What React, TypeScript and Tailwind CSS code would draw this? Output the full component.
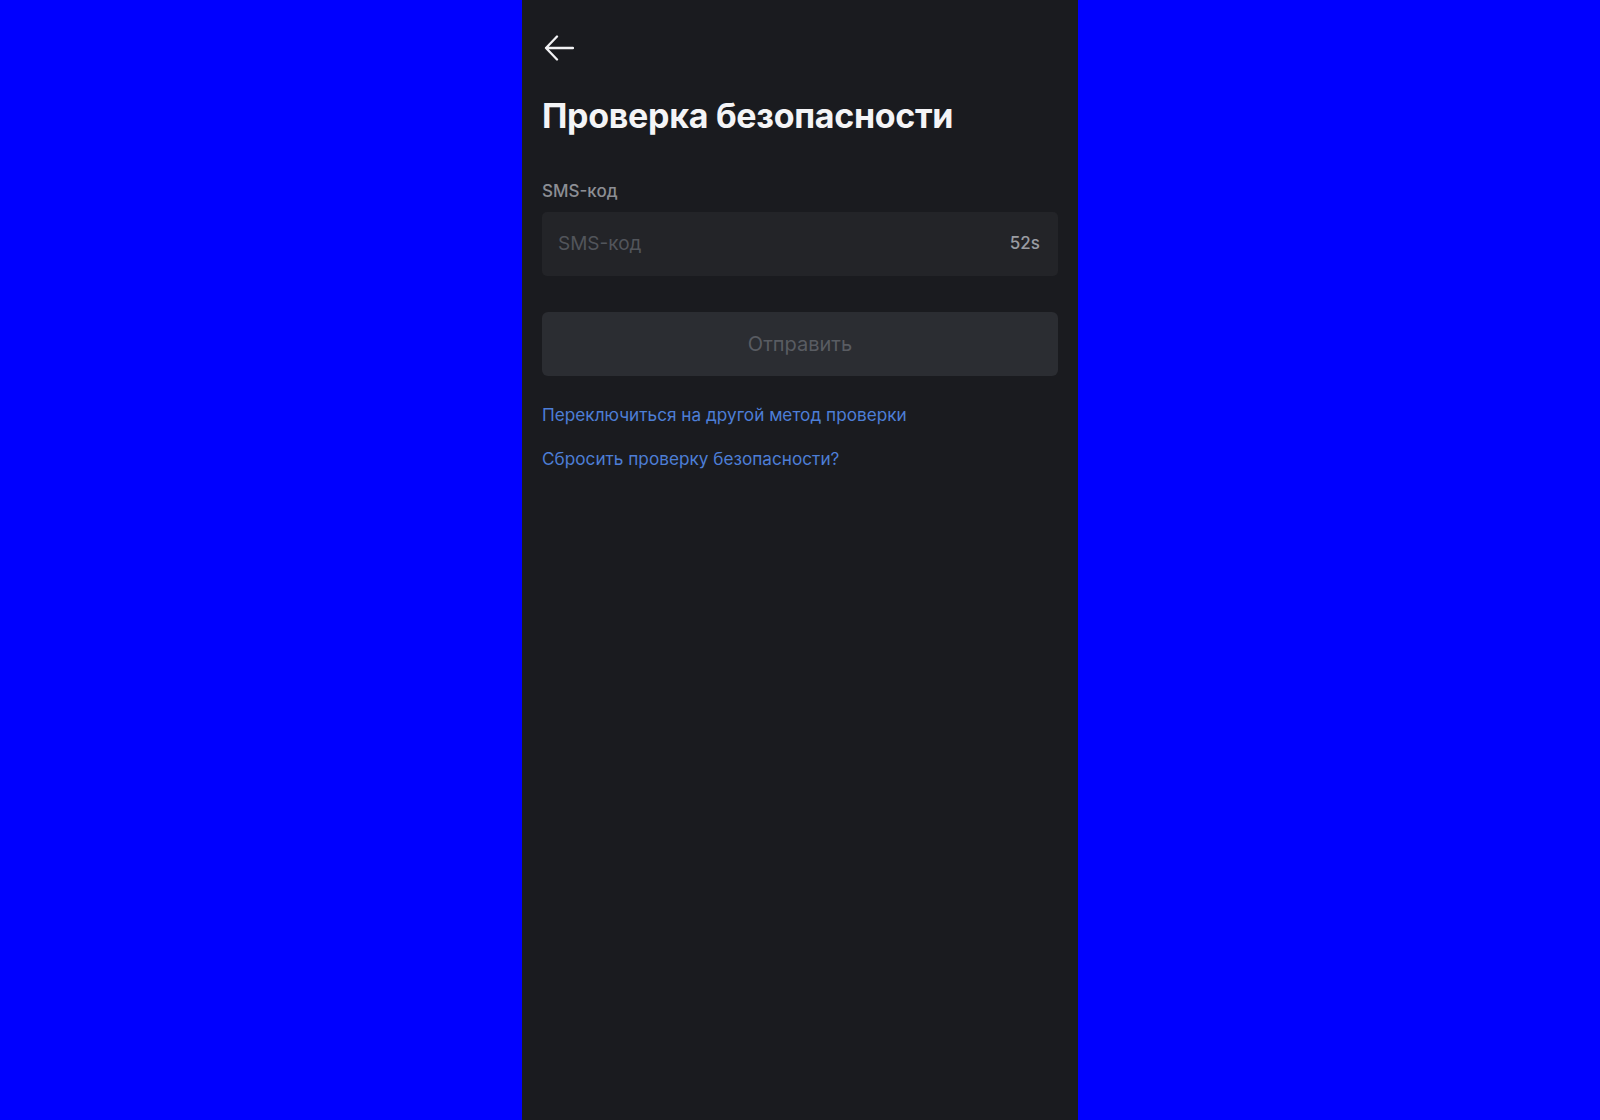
import React, { useState } from 'react';

const BackArrow: React.FC = () => (
  <svg width="30" height="26" viewBox="0 0 30 26" fill="none" className="text-[#f2f2f4]">
    <path d="M2 13h27M13 1.5 2 13l11 11.5" stroke="currentColor" strokeWidth="2.3" strokeLinecap="round" strokeLinejoin="round" />
  </svg>
);

const App: React.FC = () => {
  const [code, setCode] = useState('');
  const seconds = 52;

  return (
    <div className="min-h-[1120px] w-full bg-[#0000ff] flex justify-center" style={{ fontFamily: 'Inter, "Noto Sans", sans-serif' }}>
      <div className="w-[556px] min-h-[1120px] bg-[#1a1b1f] px-5 flex flex-col">
        <button className="mt-[35px] ml-[2px] w-[30px] h-[26px] flex items-center" aria-label="Назад">
          <BackArrow />
        </button>

        <h1 className="mt-[33px] text-[34px] leading-[44px] font-bold tracking-[-0.3px] text-[#f4f4f6]">
          Проверка безопасности
        </h1>

        <label className="mt-[42px] text-[17px] leading-[22px] font-medium text-[#8c8e94]">SMS-код</label>

        <div className="mt-[10px] h-[64px] rounded-[5px] bg-[#232428] flex items-center pl-4 pr-[18px]">
          <input
            value={code}
            onChange={(e) => setCode(e.target.value)}
            placeholder="SMS-код"
            className="flex-1 bg-transparent outline-none text-[19px] text-[#e6e6e8] placeholder:text-[#52555b]"
          />
          <span className="text-[17px] font-medium text-[#9a9ca2]">{seconds}s</span>
        </div>

        <button
          disabled
          className="mt-[36px] h-[64px] rounded-[6px] bg-[#2b2d32] text-[20px] text-[#595c62]"
        >
          Отправить
        </button>

        <div className="mt-[27px] flex flex-col gap-[20px] text-[17.2px] leading-[24px] text-[#4d7ed6]">
          <a href="#" className="self-start">Переключиться на другой метод проверки</a>
          <a href="#" className="self-start">Сбросить проверку безопасности?</a>
        </div>
      </div>
    </div>
  );
};

export default App;
